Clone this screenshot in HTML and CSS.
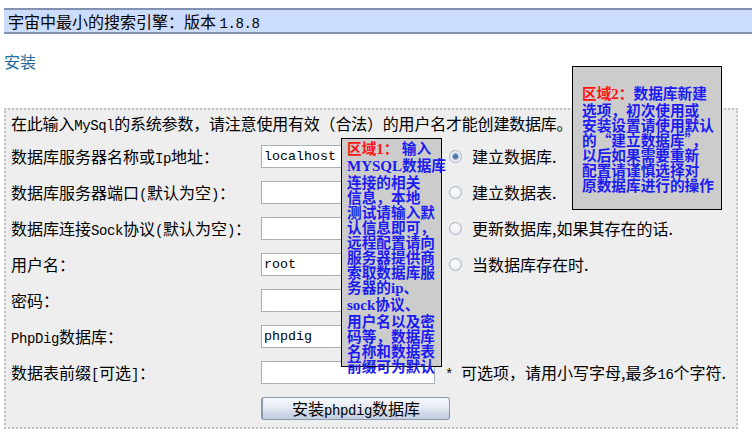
FILE: index.html
```html
<!DOCTYPE html>
<html lang="zh-CN">
<head>
<meta charset="utf-8">
<title>PhpDig 安装</title>
<link rel="stylesheet" href="styles.css">
</head>
<body>
<div class="title">宇宙中最小的搜索引擎：版本 <span class="en">1.8.8</span></div>
<a class="install-link" href="#">安装</a>

<form class="panel">
  <div class="intro">在此输入<span class="en">MySql</span>的系统参数，请注意使用有效（合法）的用户名才能创建数据库。</div>
  <div class="grid">
    <div class="label">数据库服务器名称或<span class="en">Ip</span>地址：</div>
    <div class="field"><input class="text" type="text" value="localhost"></div>
    <label class="opt"><input class="radio" type="radio" name="mode" checked>建立数据库.</label>

    <div class="label">数据库服务器端口<span class="en">(</span>默认为空<span class="en">)</span>：</div>
    <div class="field"><input class="text" type="text" value=""></div>
    <label class="opt"><input class="radio" type="radio" name="mode">建立数据表.</label>

    <div class="label">数据库连接<span class="en">Sock</span>协议<span class="en">(</span>默认为空<span class="en">)</span>：</div>
    <div class="field"><input class="text" type="text" value=""></div>
    <label class="opt"><input class="radio" type="radio" name="mode">更新数据库,如果其存在的话.</label>

    <div class="label">用户名：</div>
    <div class="field"><input class="text" type="text" value="root"></div>
    <label class="opt"><input class="radio" type="radio" name="mode">当数据库存在时.</label>

    <div class="label">密码：</div>
    <div class="field"><input class="text" type="password" value=""></div>
    <div></div>

    <div class="label"><span class="en">PhpDig</span>数据库：</div>
    <div class="field"><input class="text" type="text" value="phpdig"></div>
    <div></div>

    <div class="label">数据表前缀<span class="en">[</span>可选<span class="en">]</span>：</div>
    <div class="field"><input class="text" type="text" value=""></div>
    <div class="note"><span class="en">* </span>可选项，请用小写字母,最多<span class="en">16</span>个字符.</div>

    <div></div>
    <div class="field wide"><button class="submit" type="button">安装<span class="en">phpdig</span>数据库</button></div>
  </div>
</form>

<div class="tip tip-one"><span class="red">区域<span class="lat">1</span>：</span> 输入<br><span class="lat">MYSQL</span>数据库<br>连接的相关<br>信息，本地<br>测试请输入默<br>认信息即可，<br>远程配置请向<br>服务器提供商<br>索取数据库服<br>务器的<span class="lat">ip</span>、<br><span class="lat">sock</span>协议、<br>用户名以及密<br>码等，数据库<br>名称和数据表<br>前缀可为默认</div>

<div class="tip tip-two"><span class="red">区域<span class="lat">2</span>：</span>数据库新建<br>选项，初次使用或<br>安装设置请使用默认<br>的“建立数据库”，<br>以后如果需要重新<br>配置请谨慎选择对<br>原数据库进行的操作</div>
</body>
</html>
```

FILE: styles.css
```css
html, body {
  height: 100%;
}

body {
  margin: 8px 0 0 4px;
  background: #ffffff;
  color: #000000;
  font-family: "Noto Sans CJK SC", sans-serif;
  font-size: 16px;
  overflow: hidden;
}

.en {
  font-family: "Liberation Mono", monospace;
  font-size: 14px;
  line-height: 1;
  letter-spacing: -0.4px;
}

.title {
  height: 22px;
  line-height: 22px;
  padding-left: 4px;
  background: #ccdcfc;
  border-top: 2px solid #8291b0;
  border-bottom: 2px solid #8291b0;
  white-space: nowrap;
  overflow: hidden;
}

.install-link {
  display: block;
  width: max-content;
  margin-top: 17px;
  line-height: 20px;
  color: #1f6b9d;
  text-decoration: none;
}

.panel {
  width: 725px;
  margin: 37px 0 0 0;
  padding: 3px 0 1px 5px;
  background: #eeeeee;
  border: 2px dotted #c2c2c2;
}

.intro {
  height: 20px;
  line-height: 20px;
  margin-bottom: 5px;
  white-space: nowrap;
  letter-spacing: -0.2px;
}

.grid {
  display: grid;
  grid-template-columns: 250px 184px 1fr;
  grid-auto-rows: 36px;
  align-items: center;
}

.label {
  white-space: nowrap;
}

.field {
  display: flex;
  align-items: center;
}

.wide {
  grid-column: 2 / 4;
}

.text {
  box-sizing: border-box;
  width: 174px;
  height: 23px;
  margin: 0;
  padding: 0 2px;
  border: 1px solid #a7aeb6;
  background: #ffffff;
  font-family: "Liberation Mono", monospace;
  font-size: 13.33px;
  color: #000000;
  outline: none;
}

.opt {
  display: flex;
  align-items: center;
  gap: 10px;
  padding-left: 4px;
  white-space: nowrap;
}

.radio {
  appearance: none;
  -webkit-appearance: none;
  width: 13px;
  height: 13px;
  margin: 0;
  flex: none;
  border: 1px solid #a6b3c6;
  border-radius: 50%;
  background: radial-gradient(circle at 45% 40%, #ffffff 0, #f0f3f7 45%, #d5dde8 100%);
}

.radio:checked {
  background: radial-gradient(circle, #4c6ca6 0, #5a79b0 2px, #a8bbd8 3px, #f3f6fa 4.5px, #dfe5ee 100%);
}

.note {
  white-space: nowrap;
}

.submit {
  box-sizing: border-box;
  width: 189px;
  height: 23px;
  margin: 0;
  padding: 0;
  border: 1px solid #8b97ab;
  border-left: 2px solid #8d99ae;
  border-radius: 3px;
  background: linear-gradient(#f7f9fc 0%, #e6ebf3 45%, #d0d9e8 70%, #c3cee1 100%);
  font-family: "Noto Sans CJK SC", sans-serif;
  font-size: 16px;
  color: #000000;
  line-height: 20px;
}

.tip {
  position: absolute;
  box-sizing: border-box;
  background: #cccccc;
  border: 1px solid #000000;
  color: #1c1cf2;
  font-family: "Noto Sans CJK SC", sans-serif;
  font-weight: bold;
  font-size: 14.67px;
  line-height: 15px;
  white-space: nowrap;
}

.tip .lat {
  font-family: "Liberation Serif", serif;
  font-size: 15px;
  line-height: 1;
}

.tip .red {
  color: #ff1414;
}

.tip-one {
  left: 341px;
  top: 138px;
  width: 101px;
  height: 229px;
  padding: 1px 0 0 5px;
}

.tip-two {
  left: 572px;
  top: 66px;
  width: 150px;
  height: 144px;
  padding: 18px 0 0 9px;
}
```
